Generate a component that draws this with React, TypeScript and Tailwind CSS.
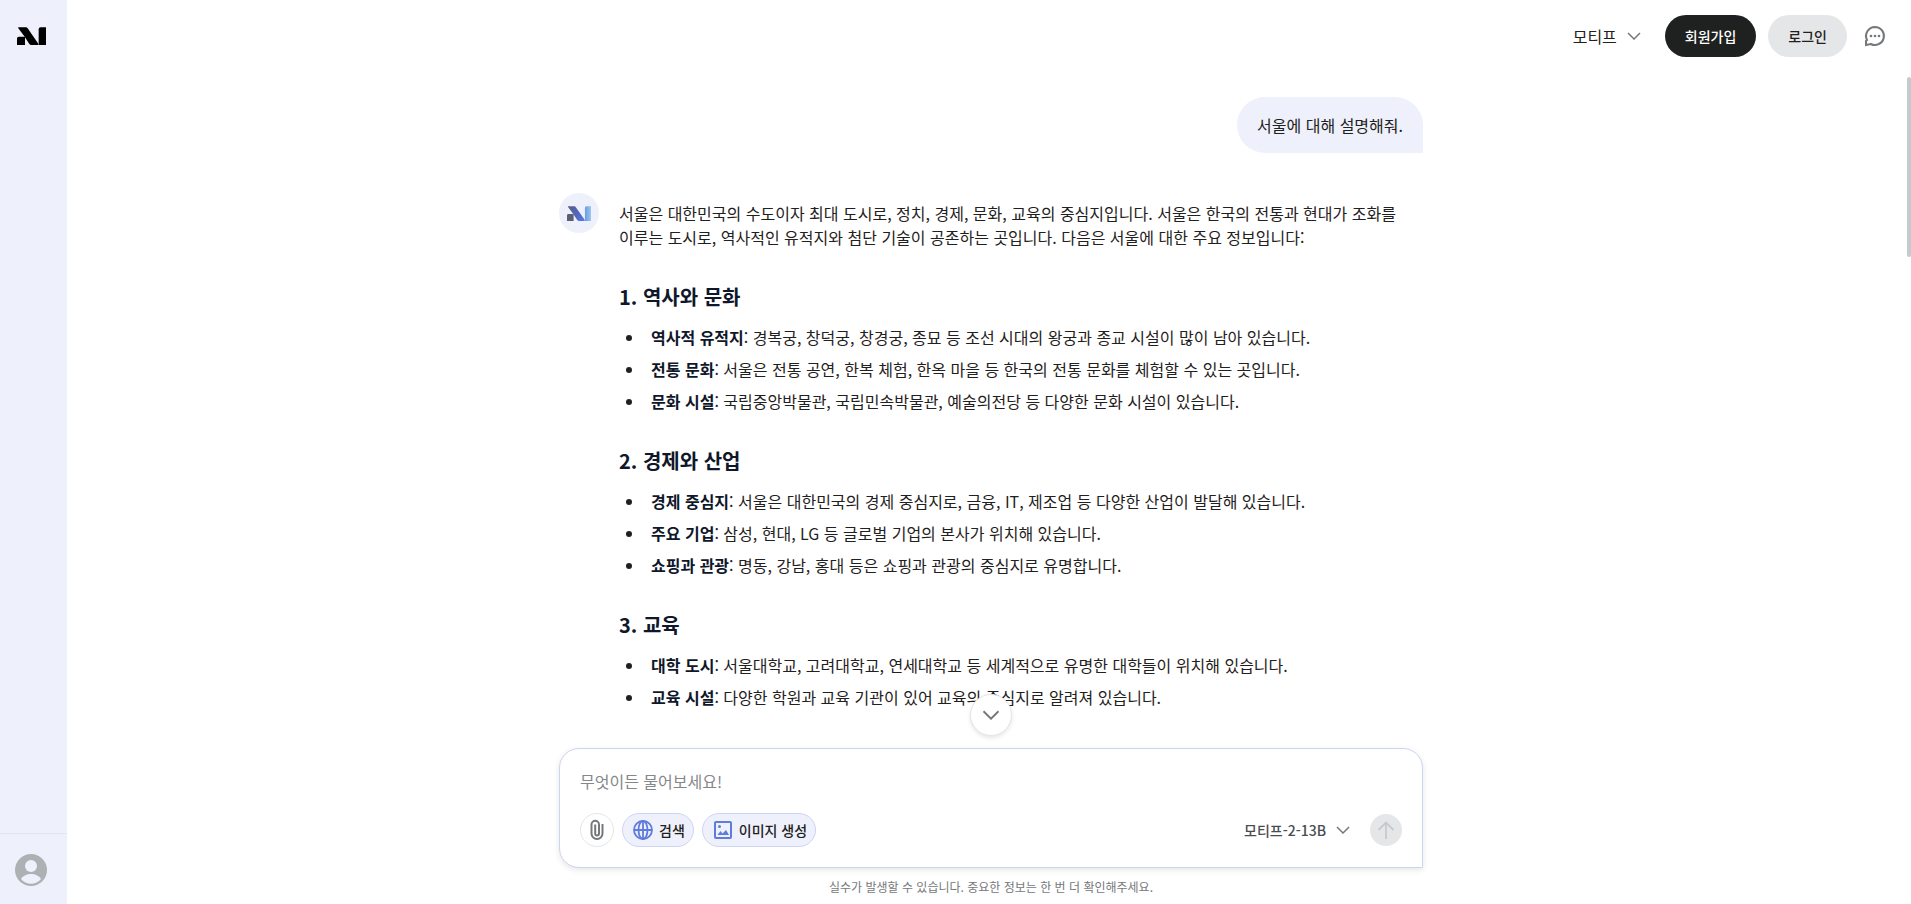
type Item = {
  label: string;
  text: string;
};

type Section = {
  title: string;
  items: Item[];
};

const sections: Section[] = [
  {
    title: "1. 역사와 문화",
    items: [
      {
        label: "역사적 유적지",
        text: "경복궁, 창덕궁, 창경궁, 종묘 등 조선 시대의 왕궁과 종교 시설이 많이 남아 있습니다.",
      },
      {
        label: "전통 문화",
        text: "서울은 전통 공연, 한복 체험, 한옥 마을 등 한국의 전통 문화를 체험할 수 있는 곳입니다.",
      },
      {
        label: "문화 시설",
        text: "국립중앙박물관, 국립민속박물관, 예술의전당 등 다양한 문화 시설이 있습니다.",
      },
    ],
  },
  {
    title: "2. 경제와 산업",
    items: [
      {
        label: "경제 중심지",
        text: "서울은 대한민국의 경제 중심지로, 금융, IT, 제조업 등 다양한 산업이 발달해 있습니다.",
      },
      {
        label: "주요 기업",
        text: "삼성, 현대, LG 등 글로벌 기업의 본사가 위치해 있습니다.",
      },
      {
        label: "쇼핑과 관광",
        text: "명동, 강남, 홍대 등은 쇼핑과 관광의 중심지로 유명합니다.",
      },
    ],
  },
  {
    title: "3. 교육",
    items: [
      {
        label: "대학 도시",
        text: "서울대학교, 고려대학교, 연세대학교 등 세계적으로 유명한 대학들이 위치해 있습니다.",
      },
      {
        label: "교육 시설",
        text: "다양한 학원과 교육 기관이 있어 교육의 중심지로 알려져 있습니다.",
      },
    ],
  },
];

function Logo({
  className,
  colored = false,
}: {
  className: string;
  colored?: boolean;
}) {
  return (
    <svg viewBox="0 0 87 54" className={className} aria-hidden="true">
      {colored && (
        <defs>
          <linearGradient id="stroke" x1="0" y1="0" x2="1" y2="1">
            <stop offset="0" stopColor="#5a5f80" />
            <stop offset="0.6" stopColor="#5168c4" />
            <stop offset="1" stopColor="#5b7be0" />
          </linearGradient>
          <linearGradient id="bar" x1="0" y1="0" x2="1" y2="0">
            <stop offset="0" stopColor="#6a9be0" />
            <stop offset="1" stopColor="#9cc6ee" />
          </linearGradient>
        </defs>
      )}
      <path
        d="M5 29H24V54H0V34Q0 29 5 29Z"
        fill={colored ? "#5b5f74" : "#000"}
      />
      <path
        d="M3 1H27Q30 1 32 4L64 50V54H43Q39 54 37 51L22 28L5 5Z"
        fill={colored ? "url(#stroke)" : "#000"}
      />
      <path
        d="M71 1H87V54H65V7Q65 1 71 1Z"
        fill={colored ? "url(#bar)" : "#000"}
      />
    </svg>
  );
}

function Chevron({ className }: { className: string }) {
  return (
    <svg
      viewBox="0 0 14 8"
      className={className}
      fill="none"
      stroke="currentColor"
      strokeWidth="1.5"
      aria-hidden="true"
    >
      <path d="M1 1L7 7L13 1" />
    </svg>
  );
}

function Sidebar() {
  return (
    <aside className="flex w-[67px] shrink-0 flex-col justify-between bg-[#eef1fb]">
      <a href="#" aria-label="홈" className="mt-[27px] ml-[17px] w-[29px]">
        <Logo className="h-[18px] w-[29px]" />
      </a>

      <div className="h-[71px] border-t border-[#e2e5f0] pt-5 pl-[15px]">
        <button type="button" aria-label="프로필" className="block">
          <svg viewBox="0 0 32 32" className="size-8">
            <circle cx="16" cy="16" r="16" fill="#adb1b4" />
            <circle cx="16" cy="12" r="6" fill="#eef1fb" />
            <path
              d="M6 25C8 21.500 12 20 16 20S24 21.500 26 25C23.500 28 20 29.700 16 29.700S8.500 28 6 25Z"
              fill="#eef1fb"
            />
          </svg>
        </button>
      </div>
    </aside>
  );
}

function Header() {
  return (
    <header className="flex h-[72px] shrink-0 items-center justify-end pr-6">
      <button
        type="button"
        className="mr-[22px] flex items-center gap-2 text-base text-[#1f2120]"
      >
        모티프
        <Chevron className="h-2 w-[18px] text-[#75787b]" />
      </button>
      <button
        type="button"
        className="h-[42px] rounded-full bg-[#1f2120] px-5 text-sm font-medium text-white"
      >
        회원가입
      </button>
      <button
        type="button"
        className="ml-3 h-[42px] rounded-full bg-[#e5e6e8] px-5 text-sm font-medium text-[#1f2120]"
      >
        로그인
      </button>
      <button type="button" aria-label="문의하기" className="ml-4">
        <svg viewBox="0 0 24 24" className="size-6 text-[#75787b]" fill="none">
          <path
            d="M12 3A9 9 0 1 1 7.800 20L3 21V17L4 16A9 9 0 0 1 12 3Z"
            stroke="currentColor"
            strokeWidth="2"
          />
          <g fill="currentColor">
            <circle cx="8" cy="12" r="1.300" />
            <circle cx="12" cy="12" r="1.300" />
            <circle cx="16" cy="12" r="1.300" />
          </g>
        </svg>
      </button>
    </header>
  );
}

function Answer() {
  return (
    <article className="mt-10 flex gap-5 break-keep">
      <div className="flex size-10 shrink-0 items-center justify-center rounded-full bg-[#eef1fb]">
        <Logo className="h-[15px] w-6" colored />
      </div>

      <div className="min-w-0 flex-1 pt-2">
        <p>
          서울은 대한민국의 수도이자 최대 도시로, 정치, 경제, 문화, 교육의
          중심지입니다. 서울은 한국의 전통과 현대가 조화를 이루는 도시로,
          역사적인 유적지와 첨단 기술이 공존하는 곳입니다. 다음은 서울에 대한
          주요 정보입니다:
        </p>

        {sections.map((section) => (
          <section key={section.title} className="pt-[34px]">
            <h3 className="text-xl font-semibold text-[#0f172a]">
              {section.title}
            </h3>
            <ul className="mt-[14px] list-disc space-y-2 pl-[26px]">
              {section.items.map((item) => (
                <li key={item.label} className="pl-1.5">
                  <strong className="font-semibold text-[#0f172a]">
                    {item.label}
                  </strong>
                  : {item.text}
                </li>
              ))}
            </ul>
          </section>
        ))}
      </div>
    </article>
  );
}

function Composer() {
  return (
    <form className="rounded-[20px] rounded-br-none border border-[#cdd4f2] bg-white p-5 shadow-[0_2px_6px_rgba(0,0,0,0.1)]">
      <textarea
        rows={1}
        aria-label="메시지"
        placeholder="무엇이든 물어보세요!"
        className="block h-6 w-full resize-none outline-none placeholder:text-[#85888a]"
      />

      <div className="mt-5 flex items-center gap-2">
        <button
          type="button"
          aria-label="파일 첨부"
          className="flex size-[34px] items-center justify-center rounded-full border border-[#e5e6e8]"
        >
          <svg
            viewBox="0 0 24 24"
            className="size-6 text-[#75787b]"
            fill="none"
            stroke="currentColor"
            strokeWidth="2"
          >
            <path d="M17.500 6V15.500A5.500 5.500 0 0 1 6.500 15.500V6.500A3.700 3.700 0 0 1 14 6.500V15.500A1.900 1.900 0 0 1 10.200 15.500V6.500" />
          </svg>
        </button>
        <button
          type="button"
          className="flex h-[34px] items-center gap-1.5 rounded-full border border-[#cdd4f2] bg-[#eef1fb] pr-2 pl-[10px] text-sm font-medium text-[#1f2120]"
        >
          <svg
            viewBox="0 0 20 20"
            className="size-5 text-[#5f7bdc]"
            fill="none"
            stroke="currentColor"
            strokeWidth="1.800"
          >
            <circle cx="10" cy="10" r="9" />
            <ellipse cx="10" cy="10" rx="4.500" ry="9" />
            <path d="M1 10H19M10 1V19" />
          </svg>
          검색
        </button>
        <button
          type="button"
          className="flex h-[34px] items-center gap-1.5 rounded-full border border-[#cdd4f2] bg-[#eef1fb] pr-2 pl-[10px] text-sm font-medium text-[#1f2120]"
        >
          <svg viewBox="0 0 20 20" className="size-5 text-[#5f7bdc]">
            <rect
              x="2"
              y="2"
              width="16"
              height="16"
              rx="1"
              fill="none"
              stroke="currentColor"
              strokeWidth="2"
            />
            <circle cx="6.500" cy="6.500" r="1.500" fill="currentColor" />
            <path
              d="M4.500 15L7.500 11L9.500 13.500L13 10L16 15Z"
              fill="currentColor"
            />
          </svg>
          이미지 생성
        </button>

        <button
          type="button"
          className="ml-auto flex items-center gap-2 text-sm font-medium text-[#4a4d4f]"
        >
          모티프-2-13B
          <Chevron className="h-2 w-[18px] text-[#75787b]" />
        </button>
        <button
          type="submit"
          aria-label="보내기"
          className="ml-[10px] flex size-8 items-center justify-center rounded-full bg-[#e5e6e8]"
        >
          <svg
            viewBox="0 0 18 18"
            className="size-[18px] text-[#c5cacd]"
            fill="none"
            stroke="currentColor"
            strokeWidth="1.800"
          >
            <path d="M9 18V2M1.500 9L9 1.500L16.500 9" />
          </svg>
        </button>
      </div>
    </form>
  );
}

export default function App() {
  return (
    <div
      lang="ko"
      className="flex h-screen bg-white font-['Noto_Sans_CJK_KR','Noto_Sans',sans-serif] text-base text-[#1f2120]"
    >
      <Sidebar />

      <div className="relative flex min-w-0 flex-1 flex-col">
        <Header />

        <main className="min-h-0 flex-1 overflow-hidden pt-[25px] pl-1">
          <div className="mx-auto max-w-[864px]">
            <div className="flex justify-end">
              <p className="rounded-[28px] rounded-br-none bg-[#eef1fb] px-5 py-4">
                서울에 대해 설명해줘.
              </p>
            </div>
            <Answer />
          </div>
        </main>

        {/* scroll thumb */}
        <div className="absolute top-[77px] right-0 h-[180px] w-1 rounded-full bg-[#c5cacd]" />

        <footer className="shrink-0 pl-1">
          <div className="relative mx-auto max-w-[864px]">
            <button
              type="button"
              aria-label="맨 아래로"
              className="absolute bottom-full left-1/2 mb-3 flex size-[42px] -translate-x-1/2 items-center justify-center rounded-full border border-[#e5e6e8] bg-white shadow-[0_2px_4px_rgba(0,0,0,0.1)]"
            >
              <Chevron className="h-[10px] w-[18px] text-[#75787b]" />
            </button>
            <Composer />
          </div>
          <p className="pt-[10px] pb-2 text-center text-xs leading-[18px] text-[#75787b]">
            실수가 발생할 수 있습니다. 중요한 정보는 한 번 더 확인해주세요.
          </p>
        </footer>
      </div>
    </div>
  );
}
